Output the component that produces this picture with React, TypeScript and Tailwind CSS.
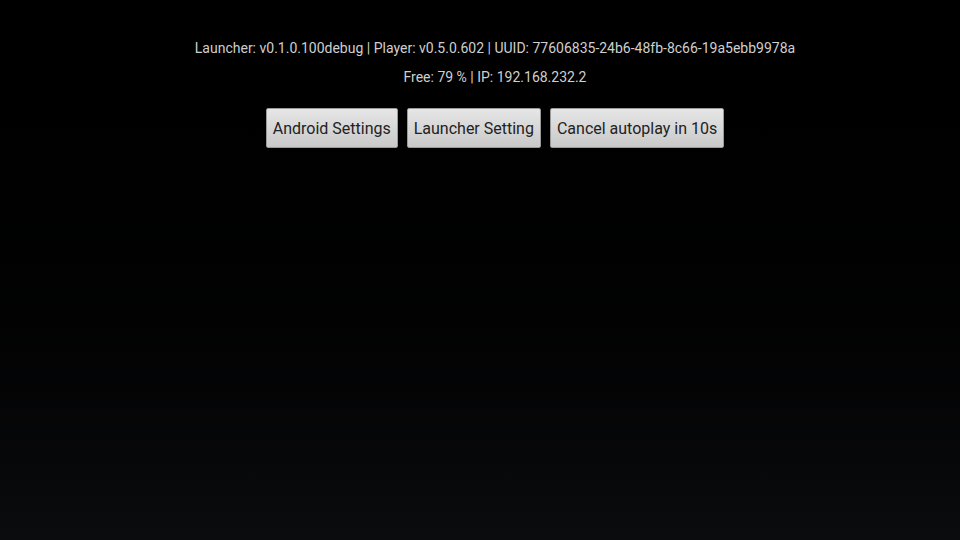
export default function App() {
  const buttons = ['Android Settings', 'Launcher Setting', 'Cancel autoplay in 10s']

  return (
    <div className="flex h-[540px] w-[960px] flex-col items-center bg-gradient-to-b from-[#000000] to-[#0b0c0e] pl-[30px] font-['Roboto',sans-serif]">
      <div className="mt-[39px] text-[14px] leading-[18px] text-[#cfcfcf]">
        Launcher: v0.1.0.100debug | Player: v0.5.0.602 | UUID: 77606835-24b6-48fb-8c66-19a5ebb9978a
      </div>
      <div className="mt-[11px] text-[14px] leading-[18px] text-[#cfcfcf]">Free: 79 % | IP: 192.168.232.2</div>
      <div className="mt-[22px] flex gap-[9px]">
        {buttons.map((label) => (
          <button
            key={label}
            className="h-[40px] rounded-[2px] border border-[#9a9a9a] bg-gradient-to-b from-[#e6e6e6] to-[#c9c9c9] px-[6px] pt-[1px] text-[16px] text-[#222222] shadow-[0_1px_1px_rgba(0,0,0,0.5)]"
          >
            {label}
          </button>
        ))}
      </div>
    </div>
  )
}
